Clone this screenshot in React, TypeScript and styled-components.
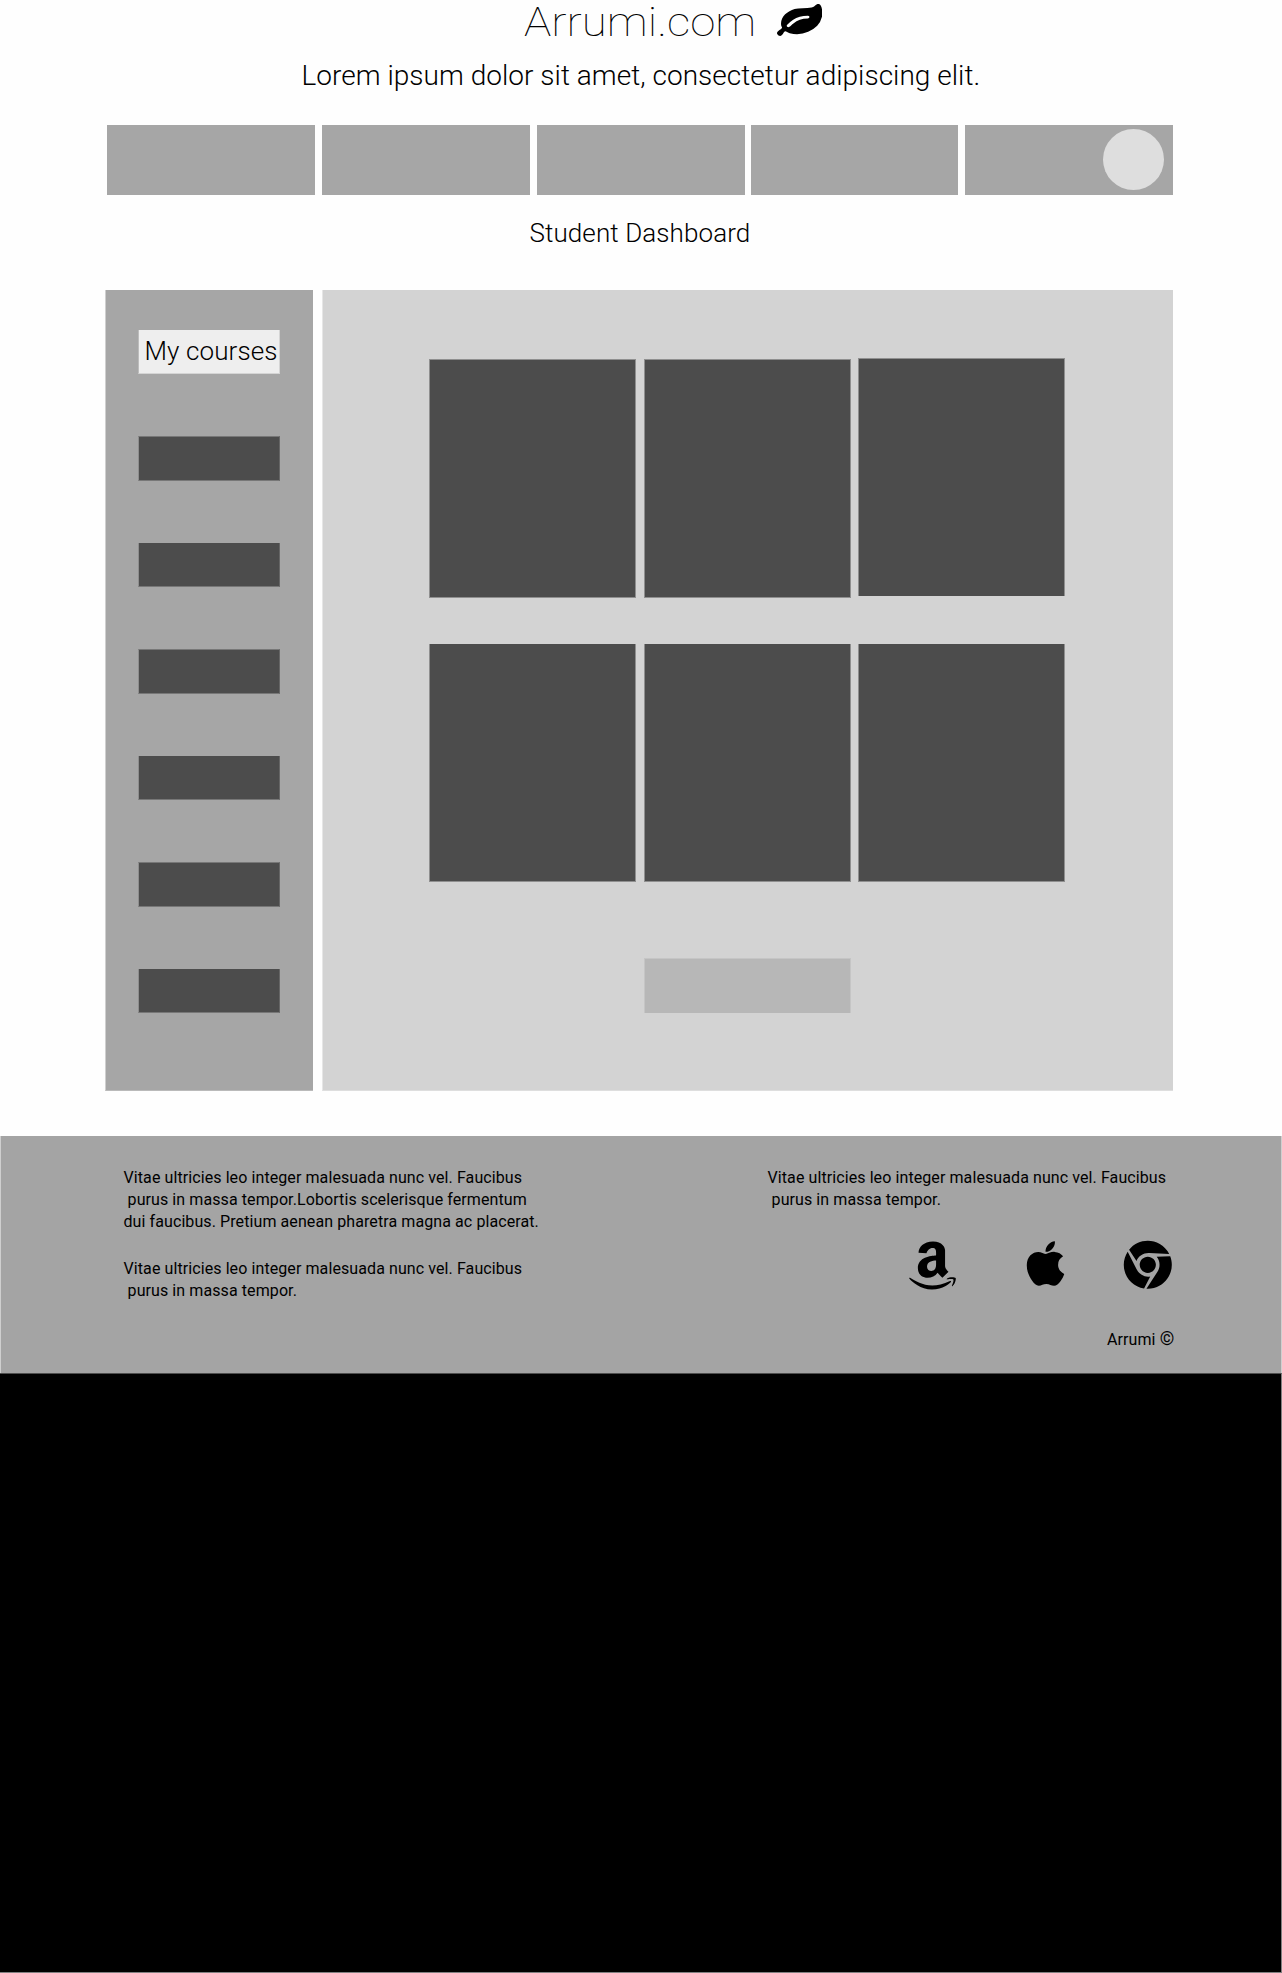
import React from 'react';
import styled, { createGlobalStyle } from 'styled-components';
import { FaAmazon, FaApple, FaChrome } from 'react-icons/fa';

const GlobalStyle = createGlobalStyle`
  *, *::before, *::after { box-sizing: border-box; }
  body { margin: 0; background: #fefefe; color: #000; font-family: Roboto, "Liberation Sans", sans-serif; }
`;

const Page = styled.div`
  width: 1282px;
  height: 1973px;
  display: flex;
  flex-direction: column;
`;

const Brand = styled.header`
  height: 50px;
  display: flex;
  align-items: flex-start;
  padding-left: 524px;
`;

const BrandName = styled.h1`
  margin: 0 51px 0 0;
  width: 202px;
  font-size: 40px;
  line-height: 46px;
  font-weight: 100;
  white-space: nowrap;
  transform: scaleX(1.142);
  transform-origin: 0 0;
`;

const Leaf = styled.svg`
  width: 45.4px;
  height: 32px;
  margin-top: 4px;
  fill: #000;
`;

const Tagline = styled.p`
  margin: 0;
  padding-left: 301.5px;
  height: 75px;
  font-size: 28px;
  line-height: 52px;
  font-weight: 300;
  letter-spacing: 0.03px;
  white-space: nowrap;
`;

const Nav = styled.nav`
  display: flex;
  padding-left: 107px;
  height: 70px;
`;

const NavItem = styled.div<{ $width: number; $gap: number }>`
  width: ${(p) => p.$width}px;
  margin-right: ${(p) => p.$gap}px;
  background: #a6a6a6;
  display: flex;
  align-items: flex-start;
  justify-content: flex-end;
  padding: 4px 9px;
`;

const Avatar = styled.div`
  width: 61px;
  height: 61px;
  border-radius: 50%;
  background: #dedede;
`;

const PageTitle = styled.h2`
  margin: 0;
  height: 95px;
  padding-left: 529.5px;
  font-size: 26px;
  line-height: 76px;
  font-weight: 300;
  letter-spacing: 0.09px;
  white-space: nowrap;
`;

const Content = styled.main`
  display: flex;
  gap: 9px;
  height: 846px;
  padding-left: 105px;
`;

const Sidebar = styled.aside`
  width: 208px;
  height: 801px;
  background: #a6a6a6;
  border-left: 1px solid #cfcfcf;
  border-bottom: 1px solid #bababa;
  padding: 40px 0 0 32px;
  display: flex;
  flex-direction: column;
  gap: 62px;
`;

const SideLabel = styled.div`
  width: 142px;
  height: 44px;
  background: #eee;
  border: solid #d4d4d4;
  border-left-color: #bcbcbc;
  border-width: 0 1px 1px;
  padding-left: 5.5px;
  font-size: 26px;
  line-height: 42px;
  font-weight: 300;
  letter-spacing: 0.1px;
  white-space: nowrap;
`;

const SideItem = styled.div<{ $half: boolean }>`
  width: 142px;
  height: ${(p) => (p.$half ? 45 : 44)}px;
  background: #4c4c4c;
  border: solid #777;
  border-left-color: #8e8e8e;
  border-right-color: #666;
  border-width: ${(p) => (p.$half ? '1px' : '0 1px 1px')};
`;

const Panel = styled.section`
  width: 851px;
  height: 801px;
  background: #d3d3d3;
  border-left: 1px solid #e6e6e6;
  border-bottom: 1px solid #dedede;
  padding: 68px 0 0 106px;
`;

const CardRow = styled.div`
  display: flex;
  height: 286px;
`;

const Card = styled.div<{ $gap?: number; $drop?: number; $height: number; $edges: string }>`
  width: 207px;
  height: ${(p) => p.$height}px;
  margin-top: ${(p) => p.$drop ?? 0}px;
  margin-right: ${(p) => p.$gap ?? 0}px;
  background: #4c4c4c;
  border: solid #8f8f8f;
  border-width: ${(p) => p.$edges};
`;

const MoreButton = styled.div`
  width: 207px;
  height: 55px;
  margin: 28px 0 0 215px;
  background: #b7b7b7;
  border: 1px solid #c5c5c5;
  border-bottom-width: 0;
`;

const Footer = styled.footer`
  height: 237px;
  background: #a4a4a4;
  border: solid #cfcfcf;
  border-width: 0 1px;
  display: flex;
  padding: 31px 0 0 122.5px;
`;

const FooterColumn = styled.div<{ $width: number }>`
  width: ${(p) => p.$width}px;
`;

const Copy = styled.p`
  margin: 0 0 25px;
  font-size: 16px;
  line-height: 22px;
  letter-spacing: 0.09px;
  white-space: pre;
`;

const Socials = styled.div`
  display: flex;
  align-items: flex-start;
  height: 93px;
  padding-left: 137.5px;
`;

const IconBox = styled.span<{ $width: number; $top: number }>`
  display: flex;
  width: ${(p) => p.$width}px;
  padding-top: ${(p) => p.$top}px;
`;

const Copyright = styled.p`
  margin: 0;
  padding-left: 339.5px;
  font-size: 16px;
  line-height: 22px;
  letter-spacing: 0.09px;
  white-space: nowrap;
`;

const CopyrightSign = styled.span`
  font-size: 18.5px;
  line-height: 1;
`;

const Below = styled.div`
  flex: 1;
  background: #000;
  border: solid #808080;
  border-width: 0 1px 1px 0;
  border-top: 1px solid #4f4f4f;
`;

const navItems = [
  { width: 208, gap: 7 },
  { width: 208, gap: 7 },
  { width: 208, gap: 6 },
  { width: 207, gap: 7 },
  { width: 208, gap: 0, avatar: true },
];

export default function App() {
  return (
    <Page>
      <GlobalStyle />
      <Brand>
        <BrandName>Arrumi.com</BrandName>
        <Leaf viewBox="0 128 1792 1408" preserveAspectRatio="none">
          <path d="M1280 704q0-26-19-45t-45-19q-172 0-318 49.5t-259.5 134-235.5 219.5q-19 21-19 45 0 26 19 45t45 19q24 0 45-19 27-24 74-71t67-66q137-124 268.5-176t313.5-52q26 0 45-19t19-45zM1792 506q0 95-20 193-46 224-184.5 383t-357.5 268q-214 108-438 108-148 0-286-47-15-5-88-42t-96-37q-16 0-39.5 32t-45 70-52.5 70-60 32q-43 0-63.5-17.5t-45.5-59.5q-2-4-6-11t-5.5-10-3-9.5-1.5-13.5q0-35 31-73.5t68-65.5 68-56 31-48q0-4-14-38t-16-44q-9-51-9-104 0-115 43.5-220t119-184.5 170.5-139 204-95.5q55-18 145-25.5t179.5-9 178.5-6 163.5-24 113.5-56.5l29.5-29.5 29.5-28 27-20 36.5-16 43.5-4.5q39 0 70.5 46t47.5 112 24 124 8 96z" />
        </Leaf>
      </Brand>
      <Tagline>Lorem ipsum dolor sit amet, consectetur adipiscing elit.</Tagline>
      <Nav>
        {navItems.map((item, i) => (
          <NavItem key={i} $width={item.width} $gap={item.gap}>
            {item.avatar && <Avatar />}
          </NavItem>
        ))}
      </Nav>
      <PageTitle>Student Dashboard</PageTitle>
      <Content>
        <Sidebar>
          <SideLabel>My courses</SideLabel>
          {Array.from({ length: 6 }, (_, i) => (
            <SideItem key={i} $half={i % 2 === 0} />
          ))}
        </Sidebar>
        <Panel>
          <CardRow>
            <Card $height={239} $drop={1} $gap={8} $edges="1px" />
            <Card $height={239} $drop={1} $gap={7} $edges="1px" />
            <Card $height={238} $edges="1px 1px 0" />
          </CardRow>
          <CardRow>
            <Card $height={238} $gap={8} $edges="0 1px 1px" />
            <Card $height={238} $gap={7} $edges="0 1px 1px" />
            <Card $height={238} $edges="0 1px 1px" />
          </CardRow>
          <MoreButton />
        </Panel>
      </Content>
      <Footer>
        <FooterColumn $width={644}>
          <Copy>{'Vitae ultricies leo integer malesuada nunc vel. Faucibus\n purus in massa tempor.Lobortis scelerisque fermentum\ndui faucibus. Pretium aenean pharetra magna ac placerat.'}</Copy>
          <Copy>{'Vitae ultricies leo integer malesuada nunc vel. Faucibus\n purus in massa tempor.'}</Copy>
        </FooterColumn>
        <FooterColumn $width={420}>
          <Copy>{'Vitae ultricies leo integer malesuada nunc vel. Faucibus\n purus in massa tempor.'}</Copy>
          <Socials>
            <IconBox $width={115} $top={1.5}><FaAmazon size={55} /></IconBox>
            <IconBox $width={103} $top={2}><FaApple size={51} /></IconBox>
            <IconBox $width={50} $top={4}><FaChrome size={49.6} /></IconBox>
          </Socials>
          <Copyright>
            Arrumi <CopyrightSign>©</CopyrightSign>
          </Copyright>
        </FooterColumn>
      </Footer>
      <Below />
    </Page>
  );
}
